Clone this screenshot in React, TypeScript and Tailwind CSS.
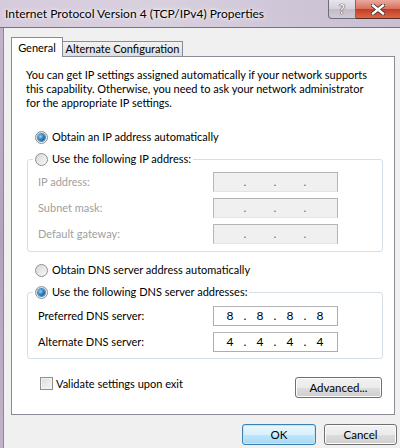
import React from 'react';

const FONT = "font-['Lato','Liberation_Sans',sans-serif]";

const Radio: React.FC<{ checked?: boolean }> = ({ checked }) => (
  <span className="relative flex h-[13px] w-[13px] shrink-0 items-center justify-center rounded-full border border-[#8e8f8f] bg-gradient-to-br from-[#d8d8d8] to-[#f8f8f8]">
    {checked && (
      <span className="h-[7px] w-[7px] rounded-full bg-[radial-gradient(circle_at_35%_35%,#8cd2ff,#1f74b8_55%,#0d4a7e)] shadow-[0_0_0_1px_#4a8bc2]" />
    )}
  </span>
);

const IpField: React.FC<{ values?: string[]; disabled?: boolean }> = ({ values, disabled }) => (
  <div
    className={`flex h-[20px] w-[125px] items-center border pl-[3px] text-[12px] ${
      disabled ? 'border-[#b5b5b5] bg-[#f0f0f0] border-b-[#e3e3e3]' : 'border-[#abadb3] border-t-[#b5b5b5] bg-white'
    }`}
  >
    {[0, 1, 2, 3].map((i) => (
      <React.Fragment key={i}>
        <span className="w-[26px] text-center text-black">{values ? values[i] : ''}</span>
        {i < 3 && (
          <span className={`w-[4px] text-center ${disabled ? 'text-[#6d6d9a]' : 'text-black'}`}>.</span>
        )}
      </React.Fragment>
    ))}
  </div>
);

const Button: React.FC<{ label: string; width: string; primary?: boolean }> = ({ label, width, primary }) => (
  <div
    className={`flex h-[21px] ${width} items-center justify-center rounded-[3px] border text-[11.5px] text-black ${
      primary
        ? 'border-[#3c7fb1] bg-[linear-gradient(#eaf6fd_0%,#d9f0fc_50%,#bee6fd_51%,#a7d9f5_100%)] shadow-[inset_0_0_0_1px_#c5e6f8]'
        : 'border-[#707070] bg-[linear-gradient(#f2f2f2_0%,#ebebeb_50%,#dddddd_51%,#cfcfcf_100%)] shadow-[inset_0_0_0_1px_#fcfcfc]'
    }`}
  >
    {label}
  </div>
);

const FieldRow: React.FC<{ label: string; disabled?: boolean; values?: string[] }> = ({ label, disabled, values }) => (
  <div className="flex h-[20px] items-center">
    <span className={`flex-1 ${disabled ? 'text-[#a0a0a0]' : 'text-black'}`}>{label}</span>
    <IpField disabled={disabled} values={values} />
  </div>
);

export default function App() {
  return (
    <div className={`flex h-[448px] w-[400px] flex-col overflow-hidden bg-[#f0f0f0] text-[11px] leading-[14px] text-black ${FONT}`}>
      {/* Title bar */}
      <div className="flex h-[28px] shrink-0 items-start border-b border-[#77737f] bg-[linear-gradient(90deg,#d6cbdc,#d9d0de_40%,#cfc6d8_70%,#c8bfd2)]">
        <span className="mt-[7px] pl-[5px] text-[12px] text-black [text-shadow:0_0_6px_#fff,0_0_3px_#fff]">
          Internet Protocol Version 4 (TCP/IPv4) Properties
        </span>
        <div className="ml-auto flex">
          <div className="flex h-[19px] w-[28px] items-center justify-center rounded-bl-[4px] border border-t-0 border-[#6f6a78] bg-[linear-gradient(#e8e4ec,#d5d0da_50%,#c2bcc8_51%,#cfcad6)]">
            <span className="text-[13px] font-bold text-[#f4f4f4] [text-shadow:0_0_1px_#333,0_0_1px_#333]">?</span>
          </div>
          <div className="flex h-[19px] w-[44px] items-center justify-center border-b border-[#5a2a24] bg-[linear-gradient(#e9a99c,#d7705c_50%,#c43c22_51%,#d86a45)]">
            <svg width="14" height="11" viewBox="0 0 14 11">
              <path d="M2 1.5 L12 9.5 M12 1.5 L2 9.5" stroke="#3b2a2a" strokeWidth="4" strokeLinecap="square" />
              <path d="M2 1.5 L12 9.5 M12 1.5 L2 9.5" stroke="#ffffff" strokeWidth="2.4" strokeLinecap="square" />
            </svg>
          </div>
        </div>
      </div>

      {/* Body */}
      <div className="flex flex-1">
        <div className="w-[3px] bg-[linear-gradient(#c2b3ca,#b3a2bd_50%,#c1b2c9)]" />
        <div className="flex flex-1 flex-col border-l border-[#8b8794]">
          {/* Tabs */}
          <div className="ml-[7px] mt-[9px] flex items-end whitespace-nowrap">
            <div className="relative z-10 -mb-px flex h-[20px] w-[52px] items-center justify-center border border-b-0 border-[#898c95] bg-white">
              General
            </div>
            <div className="flex h-[15px] w-[120px] items-center justify-center border border-b-0 border-l-0 border-[#898c95] bg-[linear-gradient(#f2f2f2,#dcdcdc)]">
              Alternate Configuration
            </div>
          </div>

          {/* Panel */}
          <div className="ml-[7px] flex h-[359px] w-[384px] flex-col border border-[#898c95] bg-white">
            <p className="mt-[11px] pl-[14px] pr-[22px]">
              You can get IP settings assigned automatically if your network supports this capability. Otherwise, you need to ask your network administrator for the appropriate IP settings.
            </p>

            <div className="ml-[23px] mt-[20px] flex items-center gap-[4px]">
              <Radio checked />
              <span>Obtain an IP address automatically</span>
            </div>

            <fieldset className="ml-[15px] mt-[8px] w-[356px] rounded-[3px] border border-[#d5dfe5] pb-[7px] pl-[10px] pr-[44px] pt-[6px]">
              <legend className="-ml-[5px] flex items-center gap-[4px] px-[2px]">
                <Radio />
                <span>Use the following IP address:</span>
              </legend>
              <div className="flex flex-col gap-[6px]">
                <FieldRow label="IP address:" disabled />
                <FieldRow label="Subnet mask:" disabled />
                <FieldRow label="Default gateway:" disabled />
              </div>
            </fieldset>

            <div className="ml-[23px] mt-[11px] flex items-center gap-[4px]">
              <Radio />
              <span>Obtain DNS server address automatically</span>
            </div>

            <fieldset className="ml-[15px] mt-[8px] w-[356px] rounded-[3px] border border-[#d5dfe5] pb-[6px] pl-[10px] pr-[44px] pt-[7px]">
              <legend className="-ml-[5px] flex items-center gap-[4px] px-[2px]">
                <Radio checked />
                <span>Use the following DNS server addresses:</span>
              </legend>
              <div className="flex flex-col gap-[6px]">
                <FieldRow label="Preferred DNS server:" values={['8', '8', '8', '8']} />
                <FieldRow label="Alternate DNS server:" values={['4', '4', '4', '4']} />
              </div>
            </fieldset>

            <div className="ml-[28px] mr-[12px] mt-[18px] flex items-start">
              <span className="h-[13px] w-[13px] border border-[#8e8f8f] bg-gradient-to-br from-[#dcdcdc] to-[#f6f6f6] shadow-[inset_0_0_0_1px_#f4f4f4]" />
              <span className="ml-[3px]">Validate settings upon exit</span>
              <div className="ml-auto">
                <Button label="Advanced..." width="w-[87px]" />
              </div>
            </div>
          </div>

          {/* Footer buttons */}
          <div className="mt-[9px] flex gap-[8px] pl-[238px]">
            <Button label="OK" width="w-[74px]" primary />
            <Button label="Cancel" width="w-[73px]" />
          </div>
        </div>
      </div>
    </div>
  );
}
